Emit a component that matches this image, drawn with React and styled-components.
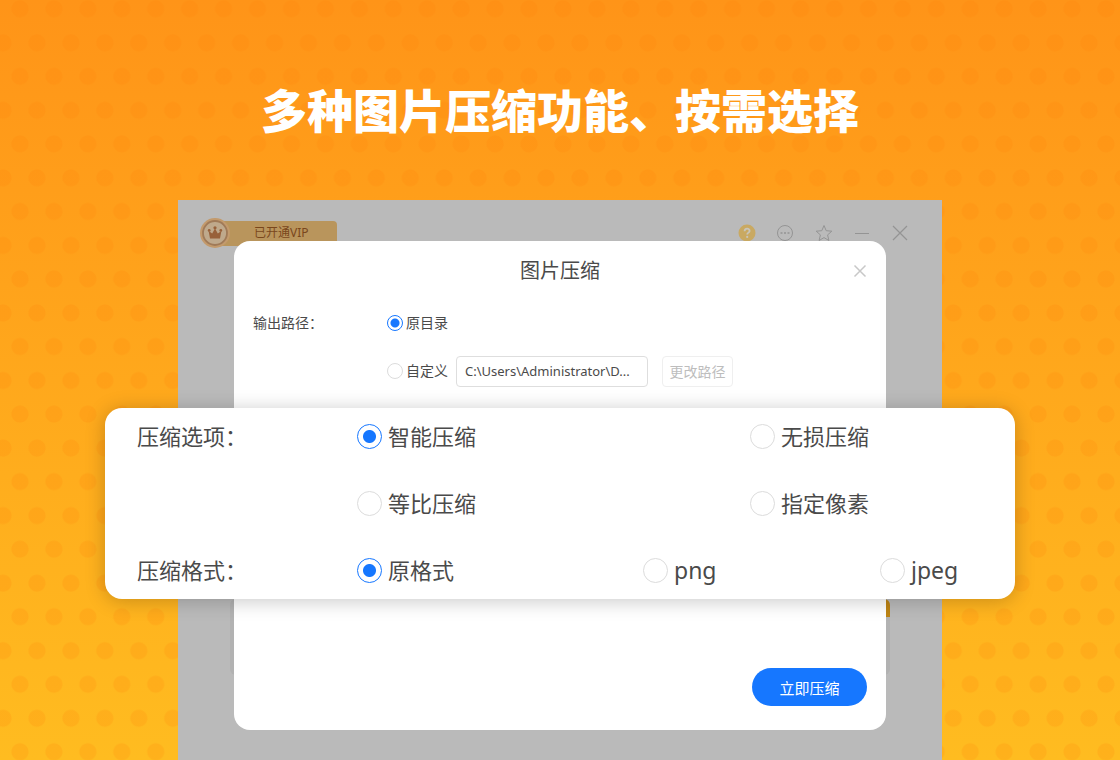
import React, { useState } from "react";
import styled, { createGlobalStyle } from "styled-components";

const GlobalStyle = createGlobalStyle`
  * {
    box-sizing: border-box;
  }
  body {
    margin: 0;
    font-family: "Noto Sans", "Noto Sans CJK SC", sans-serif;
    color: #4a4a4a;
  }
  button, input {
    font-family: inherit;
    color: inherit;
    margin: 0;
  }
`;

const Page = styled.main`
  min-height: 100vh;
  display: flex;
  flex-direction: column;
  align-items: center;
  overflow: hidden;
  background-color: #ff9a1a;
  background-image: radial-gradient(circle, rgba(255, 128, 8, 0.19) 8px, transparent 9px),
    radial-gradient(circle, rgba(255, 128, 8, 0.19) 8px, transparent 9px),
    linear-gradient(#ff9418, #ffbc20);
  background-size: calc(100% / 33) calc(100% / 11.25), calc(100% / 33) calc(100% / 11.25), 100% 100%;
  background-position: 3px -25px, 20px 9px, 0 0;
`;

const Headline = styled.h1`
  margin: 0;
  padding: 74px 16px 58px;
  font-family: "Noto Sans CJK SC", sans-serif;
  font-size: 46px;
  line-height: 68px;
  font-weight: 900;
  text-align: center;
  color: #fff;
`;

const AppWindow = styled.section`
  flex: 1;
  width: 100%;
  max-width: 764px;
  padding-bottom: 30px;
  background: #bababa;
`;

const TitleBar = styled.header`
  height: 66px;
  padding: 0 33px 0 22px;
  display: flex;
  align-items: center;
  justify-content: space-between;
`;

const VipBadge = styled.div`
  display: flex;
  align-items: center;
`;

const VipIcon = styled.svg`
  width: 30px;
  height: 30px;
  z-index: 1;
`;

const VipText = styled.span`
  width: 115px;
  height: 25px;
  margin-left: -8px;
  padding-left: 32px;
  border-radius: 0 4px 4px 0;
  background: #b9955c;
  color: #7a471c;
  font-size: 12px;
  line-height: 24px;
`;

const WindowTools = styled.div`
  width: 171px;
  display: flex;
  justify-content: space-between;
`;

const IconButton = styled.button`
  width: 18px;
  height: 18px;
  padding: 0;
  border: 0;
  background: none;
  color: ${(props) => props.$color || "#949494"};

  svg {
    display: block;
    width: 100%;
    height: 100%;
    fill: none;
    stroke: currentColor;
  }
`;

const Stage = styled.div`
  display: grid;
  justify-items: center;
  margin: -25px 52px 0;

  > * {
    grid-area: 1 / 1;
  }
`;

const BackPanel = styled.div`
  width: 100%;
  height: 76px;
  align-self: end;
  margin-bottom: 55px;
  border-radius: 6px;
  overflow: hidden;
  background: #b2b2b2;
  display: flex;
  justify-content: flex-end;
`;

const BackAction = styled.div`
  width: 120px;
  height: 18px;
  background: #bd8414;
`;

const Dialog = styled.section`
  z-index: 1;
  width: 100%;
  max-width: 652px;
  border-radius: 16px;
  background: #fff;
`;

const DialogHeader = styled.div`
  height: 60px;
  padding: 0 17px;
  display: grid;
  grid-template-columns: 18px 1fr 18px;
  align-items: center;
`;

const DialogTitle = styled.h2`
  grid-column: 2;
  margin: 0;
  font-size: 20px;
  line-height: 28px;
  font-weight: 400;
  text-align: center;
`;

const PathForm = styled.div`
  display: grid;
  row-gap: 16px;
  padding: 6px 19px 21px;
`;

const PathRow = styled.div`
  display: grid;
  grid-template-columns: 134px 1fr;
  align-items: center;
  min-height: 32px;
  font-size: 14px;
  line-height: 20px;
`;

const PathOptions = styled.div`
  grid-column: 2;
  display: flex;
  align-items: center;
`;

const RadioLabel = styled.label`
  display: flex;
  align-items: center;
  gap: ${(props) => (props.$large ? 6 : 3)}px;
  white-space: nowrap;
`;

const Radio = styled.input`
  appearance: none;
  flex: none;
  width: ${(props) => (props.$large ? 25 : 16)}px;
  height: ${(props) => (props.$large ? 25 : 16)}px;
  border: 1px solid #dcdcdc;
  border-radius: 50%;
  background: #fff;

  &:checked {
    border-color: #1677ff;
    background: radial-gradient(
      circle,
      #1677ff ${(props) => (props.$large ? 6 : 4)}px,
      #fff ${(props) => (props.$large ? 7 : 5)}px
    );
  }
`;

const PathInput = styled.input`
  width: 192px;
  height: 31px;
  margin-left: 8px;
  padding: 0 8px;
  border: 1px solid #dedede;
  border-radius: 4px;
  font-size: 13px;
  text-overflow: ellipsis;
`;

const ChangeButton = styled.button`
  width: 71px;
  height: 31px;
  margin-left: 14px;
  padding: 0;
  border: 1px solid #efefef;
  border-radius: 4px;
  background: #fff;
  color: #bdbdbd;
  font-size: 14px;
`;

const OptionCard = styled.div`
  margin: 0 -129px;
  padding: 11px 32px 12px;
  display: grid;
  row-gap: 33px;
  border-radius: 17px;
  background: #fff;
  box-shadow: 0 2px 20px rgba(0, 0, 0, 0.22);
`;

const OptionRow = styled.div`
  display: grid;
  grid-template-columns: 220px 1fr;
  align-items: center;
  height: 34px;
  font-size: 22px;
  line-height: 34px;
`;

const Options = styled.div`
  grid-column: 2;
  display: grid;
  grid-template-columns: ${(props) => props.$columns};
`;

const ChoiceText = styled.span`
  font-size: ${(props) => props.$size}px;
`;

const DialogFooter = styled.footer`
  display: flex;
  justify-content: flex-end;
  padding: 69px 19px 24px;
`;

const SubmitButton = styled.button`
  width: 115px;
  height: 38px;
  padding: 0;
  border: 0;
  border-radius: 19px;
  background: #1677ff;
  color: #fff;
  font-size: 15px;
`;

const Choice = ({ name, value, label, current, onChange, large, size = 14 }) => (
  <RadioLabel $large={large}>
    <Radio
      type="radio"
      name={name}
      value={value}
      checked={current === value}
      onChange={() => onChange(value)}
      $large={large}
    />
    <ChoiceText $size={size}>{label}</ChoiceText>
  </RadioLabel>
);

const CrownIcon = () => (
  <VipIcon viewBox="0 0 30 30">
    <circle cx="15" cy="15" r="15" fill="#c39a6c" />
    <circle cx="15" cy="15" r="12" fill="#bfa98c" stroke="#a07a58" strokeWidth="1.8" />
    <path d="M10 20.5 8.6 13l3.6 2.6L15 10.5l2.8 5.1 3.6-2.6-1.4 7.5z" fill="#98613a" />
    <circle cx="9.2" cy="12.4" r="1.4" fill="#98613a" />
    <circle cx="15" cy="9.8" r="1.6" fill="#98613a" />
    <circle cx="20.8" cy="12.4" r="1.4" fill="#98613a" />
  </VipIcon>
);

const App = () => {
  const [path, setPath] = useState("origin");
  const [mode, setMode] = useState("smart");
  const [format, setFormat] = useState("same");

  const modeProps = { name: "mode", current: mode, onChange: setMode, large: true, size: 22 };
  const formatProps = { name: "format", current: format, onChange: setFormat, large: true };

  return (
    <>
      <GlobalStyle />
      <Page>
        <Headline>多种图片压缩功能、按需选择</Headline>
        <AppWindow>
          <TitleBar>
            <VipBadge>
              <CrownIcon />
              <VipText>已开通VIP</VipText>
            </VipBadge>
            <WindowTools>
              <IconButton aria-label="帮助" $color="#c9a962">
                <svg viewBox="0 0 18 18">
                  <circle cx="9" cy="9" r="8.5" fill="currentColor" stroke="none" />
                  <path d="M6.6 7.2c0-3.3 5-3.2 5-.3 0 1.7-2.4 1.8-2.4 3.6" stroke="#c9c5bb" strokeWidth="1.8" />
                  <circle cx="9.2" cy="12.9" r="1.1" fill="#c9c5bb" stroke="none" />
                </svg>
              </IconButton>
              <IconButton aria-label="更多">
                <svg viewBox="0 0 18 18">
                  <circle cx="9" cy="9" r="7.5" />
                  <path d="M4.5 9h2M8 9h2M11.5 9h2" strokeWidth="1.6" />
                </svg>
              </IconButton>
              <IconButton aria-label="收藏">
                <svg viewBox="0 0 18 18">
                  <path d="m9 1.5 2.2 5.2 5.6.5-4.2 3.7 1.3 5.6L9 13.6l-4.9 2.9 1.3-5.6L1.2 7.2l5.6-.5z" strokeLinejoin="round" />
                </svg>
              </IconButton>
              <IconButton aria-label="最小化">
                <svg viewBox="0 0 18 18">
                  <path d="M2 9.5h14" />
                </svg>
              </IconButton>
              <IconButton aria-label="关闭窗口">
                <svg viewBox="0 0 18 18">
                  <path d="m2 2 14 14M16 2 2 16" strokeWidth="1.2" />
                </svg>
              </IconButton>
            </WindowTools>
          </TitleBar>

          <Stage>
            <BackPanel>
              <BackAction />
            </BackPanel>
            <Dialog>
              <DialogHeader>
                <DialogTitle>图片压缩</DialogTitle>
                <IconButton aria-label="关闭" $color="#c8c8c8">
                  <svg viewBox="0 0 18 18">
                    <path d="m3.5 3.5 11 11M14.5 3.5l-11 11" strokeWidth="1.5" />
                  </svg>
                </IconButton>
              </DialogHeader>

              <PathForm>
                <PathRow>
                  <span>输出路径：</span>
                  <PathOptions>
                    <Choice name="path" value="origin" label="原目录" current={path} onChange={setPath} />
                  </PathOptions>
                </PathRow>
                <PathRow>
                  <PathOptions>
                    <Choice name="path" value="custom" label="自定义" current={path} onChange={setPath} />
                    <PathInput aria-label="自定义路径" readOnly value="C:\Users\Administrator\D..." />
                    <ChangeButton disabled>更改路径</ChangeButton>
                  </PathOptions>
                </PathRow>
              </PathForm>

              <OptionCard>
                <OptionRow>
                  <span>压缩选项：</span>
                  <Options $columns="393px 1fr">
                    <Choice {...modeProps} value="smart" label="智能压缩" />
                    <Choice {...modeProps} value="lossless" label="无损压缩" />
                  </Options>
                </OptionRow>
                <OptionRow>
                  <Options $columns="393px 1fr">
                    <Choice {...modeProps} value="ratio" label="等比压缩" />
                    <Choice {...modeProps} value="pixel" label="指定像素" />
                  </Options>
                </OptionRow>
                <OptionRow>
                  <span>压缩格式：</span>
                  <Options $columns="286px 237px 1fr">
                    <Choice {...formatProps} value="same" label="原格式" size={22} />
                    <Choice {...formatProps} value="png" label="png" size={23} />
                    <Choice {...formatProps} value="jpeg" label="jpeg" size={23} />
                  </Options>
                </OptionRow>
              </OptionCard>

              <DialogFooter>
                <SubmitButton>立即压缩</SubmitButton>
              </DialogFooter>
            </Dialog>
          </Stage>
        </AppWindow>
      </Page>
    </>
  );
};

export default App;
